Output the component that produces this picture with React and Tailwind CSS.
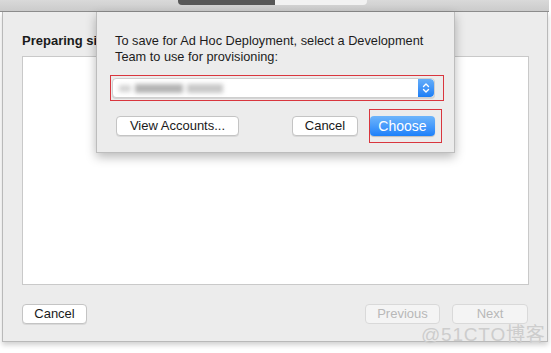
const btn =
  'flex h-[20px] items-center justify-center rounded-[4px] border border-[#c4c4c4] bg-white text-[13px] text-[#1a1a1a] shadow-[0_1px_0_rgba(0,0,0,0.08)]';
const btnOff =
  'flex h-[20px] items-center justify-center rounded-[4px] border border-[#d9d9d9] bg-[#f4f4f4] text-[13px] text-[#b8b8b8]';

function Stepper() {
  return (
    <div className="flex h-full w-[16px] items-center justify-center rounded-r-[4px] bg-gradient-to-b from-[#64adf9] to-[#1b7ef6]">
      <svg width="8" height="12" viewBox="0 0 8 12" fill="none" stroke="white" strokeWidth="1.4" strokeLinecap="round" strokeLinejoin="round">
        <path d="M1.5 4.5 L4 2 L6.5 4.5" />
        <path d="M1.5 7.5 L4 10 L6.5 7.5" />
      </svg>
    </div>
  );
}

function Sheet() {
  return (
    <div className="absolute left-[96px] top-[12px] z-10 h-[141px] w-[359px] border-x border-b border-[#bdbdbd] bg-[#ececec] shadow-[0_4px_10px_rgba(0,0,0,0.28)]">
      <div className="pl-[18px] pt-[21px] text-[12.75px] leading-[16px] text-[#1c1c1c]">
        <p>To save for Ad Hoc Deployment, select a Development</p>
        <p>Team to use for provisioning:</p>
      </div>

      <div className="ml-[15px] mt-[13px] flex h-[20px] w-[323px] overflow-hidden rounded-[4px] border border-[#cfcfcf] bg-white shadow-[0_1px_0_rgba(0,0,0,0.1)]">
        <div className="flex flex-1 items-center gap-[4px] pl-[6px] blur-[2px]">
          <span className="h-[7px] w-[12px] bg-[#d4d4d4]" />
          <span className="h-[9px] w-[48px] bg-[#b4b4b4]" />
          <span className="h-[9px] w-[36px] bg-[#c8c8c8]" />
        </div>
        <Stepper />
      </div>

      <div className="ml-[19px] mt-[18px] flex items-center">
        <button className={`${btn} w-[123px]`}>View Accounts...</button>
        <button className={`${btn} ml-[53px] w-[66px]`}>Cancel</button>
        <button className="ml-[12px] flex h-[20px] w-[65px] items-center justify-center rounded-[4px] bg-gradient-to-b from-[#6db5fb] to-[#1a80fa] text-[14px] text-white shadow-[0_1px_1px_rgba(0,0,0,0.2)]">
          Choose
        </button>
      </div>

      {/* red annotation boxes */}
      <div className="absolute left-[13px] top-[63px] h-[26px] w-[334px] border border-[#d9363e]" />
      <div className="absolute left-[272px] top-[97px] h-[34px] w-[73px] border border-[#d9363e]" />
    </div>
  );
}

export default function App() {
  return (
    <div className="relative h-[353px] w-[551px] overflow-hidden bg-white font-['Liberation_Sans',Arial,sans-serif]">
      <div className="relative h-[12px] w-[549px] border-b border-[#8c8c8c] bg-gradient-to-b from-[#d9d9d9] to-[#cbcbcb]">
        <div className="flex pl-[178px]">
          <div className="h-[5px] w-[97px] rounded-bl-[4px] bg-[#585858]" />
          <div className="h-[5px] w-[92px] rounded-br-[4px] bg-[#f2f2f2]" />
        </div>
      </div>

      <Sheet />

      <div className="ml-[2px] flex h-[330px] w-[546px] flex-col border-x border-b border-[#b9b9b9] bg-[#ececec] px-[19px] pt-[21px] shadow-[0_3px_5px_rgba(0,0,0,0.18)]">
        <h1 className="whitespace-nowrap text-[13px] font-bold leading-[16px] text-[#1a1a1a]">Preparing si</h1>
        <div className="mt-[7px] h-[229px] w-[507px] border border-[#c9c9c9] bg-white" />
        <div className="mt-[19px] flex items-center">
          <button className={`${btn} w-[65px]`}>Cancel</button>
          <button className={`${btnOff} ml-auto w-[75px]`}>Previous</button>
          <button className={`${btnOff} ml-[12px] w-[76px]`}>Next</button>
        </div>
      </div>

      <div className="absolute left-[421px] top-[324px] text-[19px] leading-[22px] tracking-[0.8px] text-[#cdcdcd] font-['Liberation_Sans','Noto_Sans_CJK_SC',sans-serif]">
        @51CTO博客
      </div>
    </div>
  );
}
